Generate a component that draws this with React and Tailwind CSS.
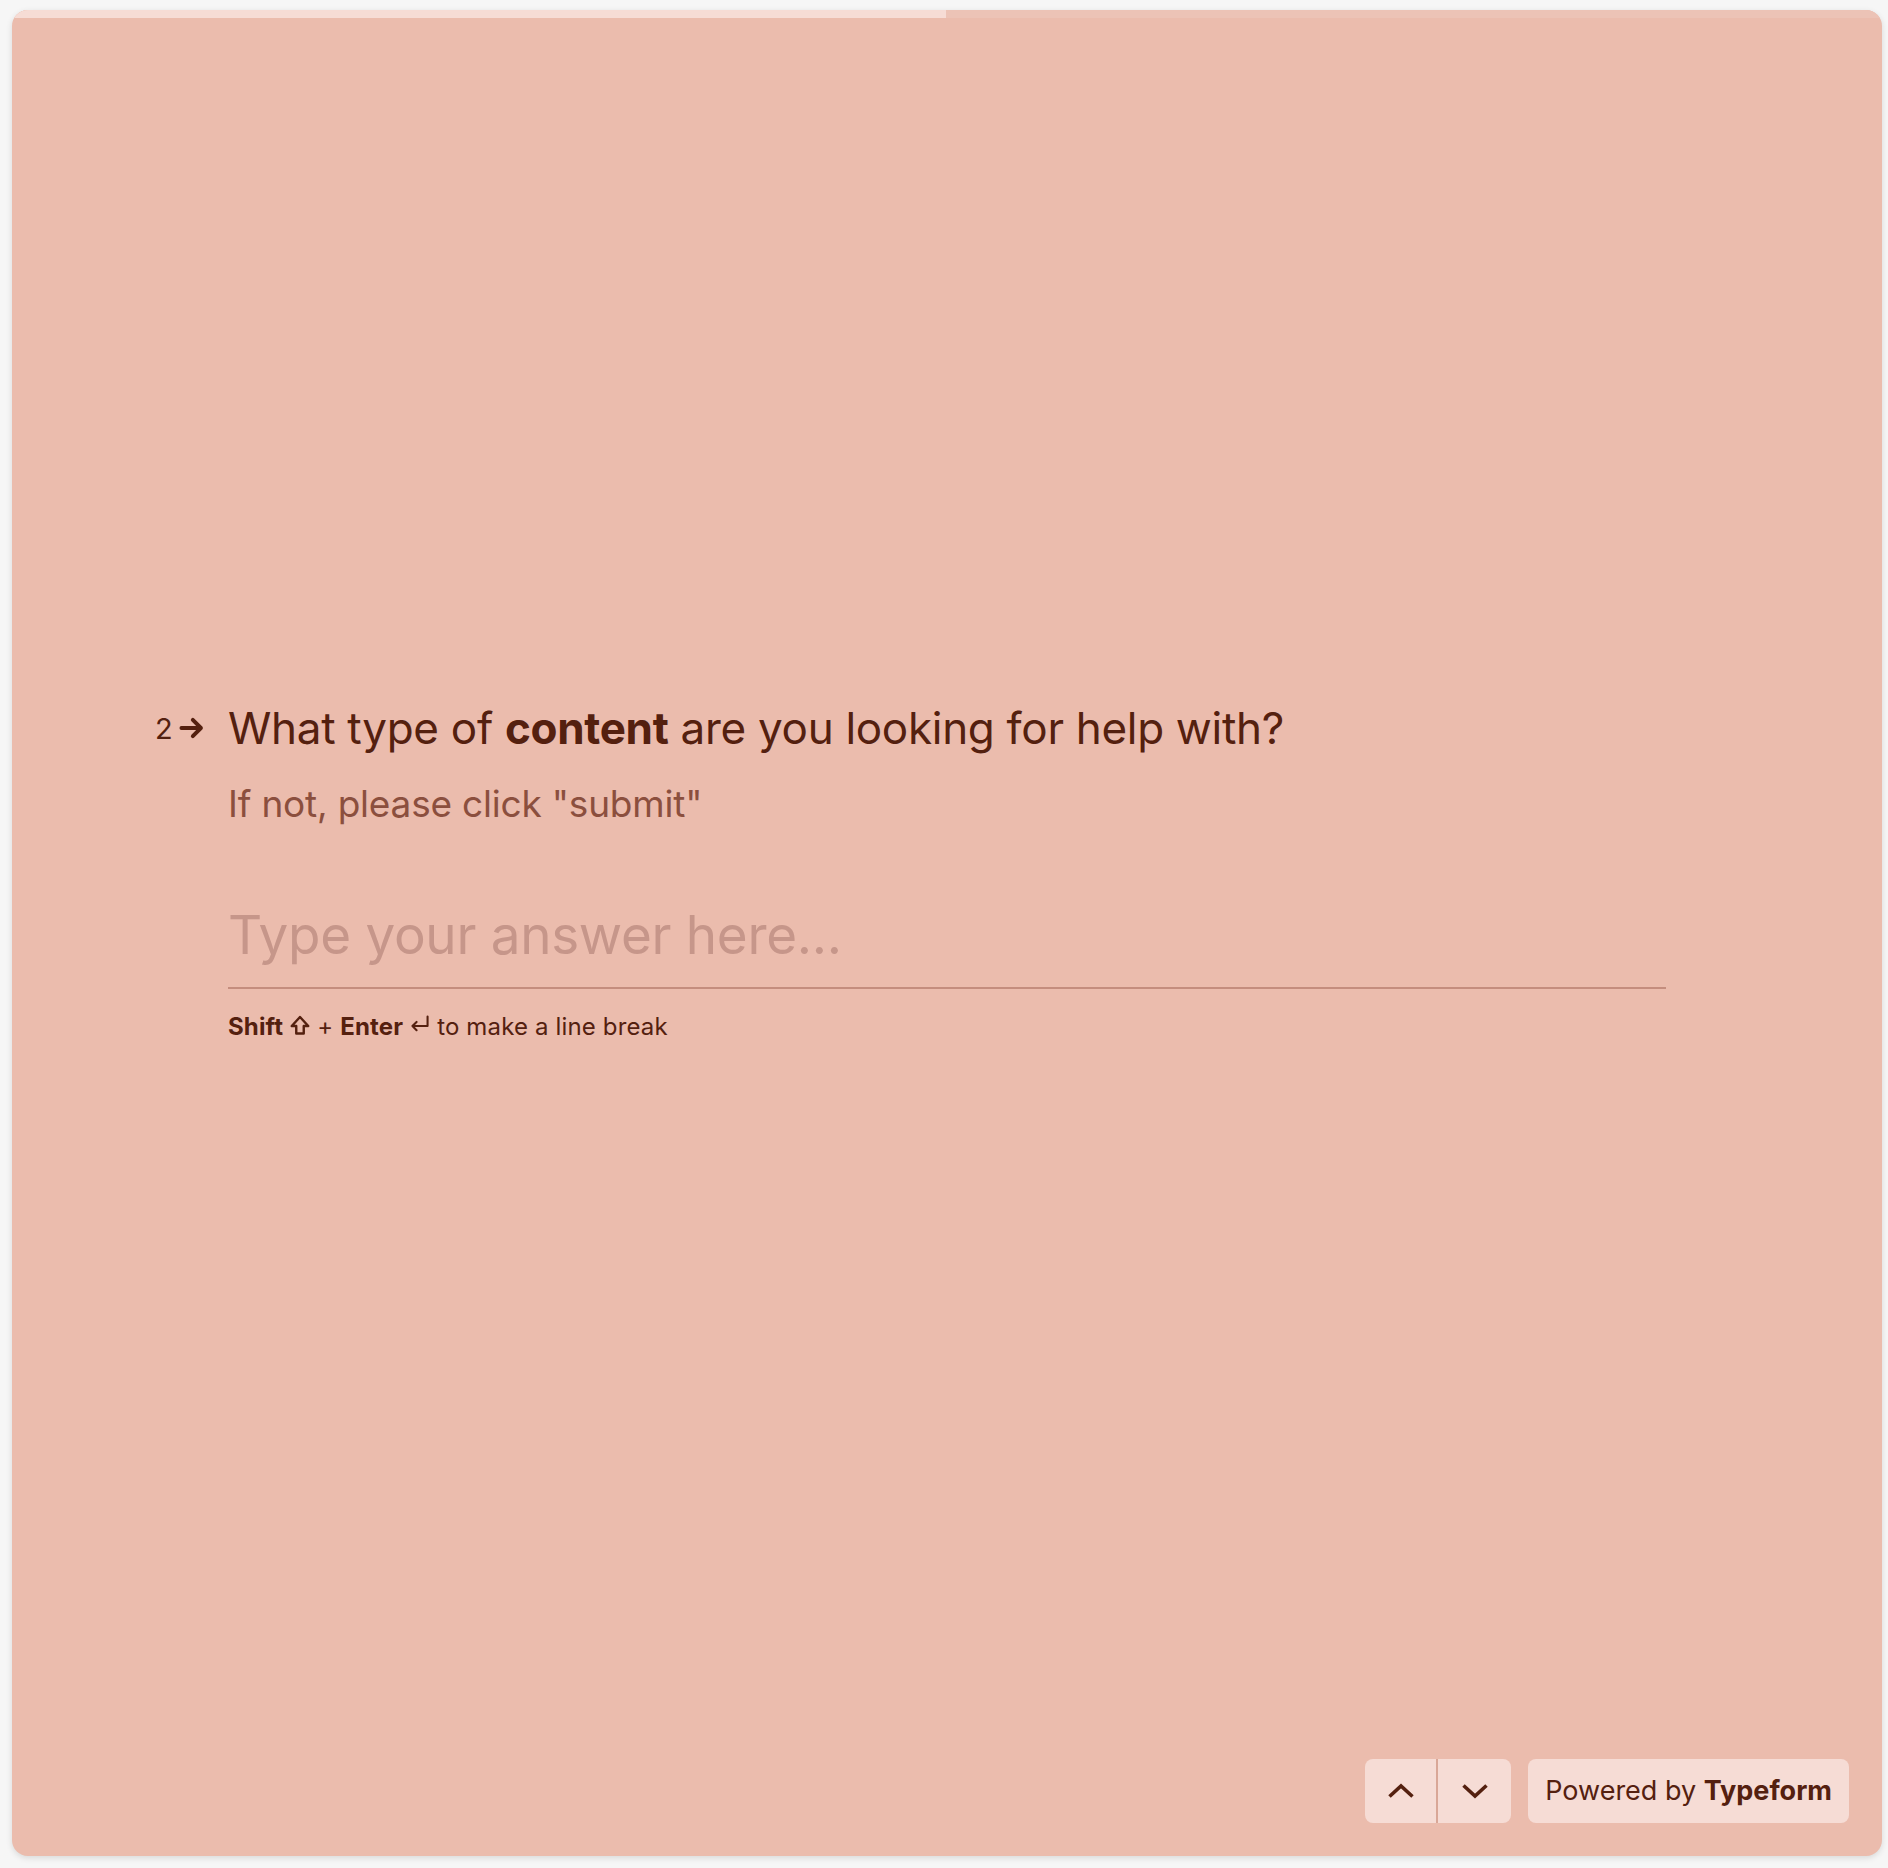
const ArrowRight = () => (
  <svg viewBox="0 0 16 16" className="w-[26px] h-[26px]" fill="none">
    <path d="M1.5 8h12M8.5 3 13.5 8l-5 5" stroke="#54200f" strokeWidth="2.4" strokeLinecap="round" strokeLinejoin="round" />
  </svg>
);

const ShiftIcon = () => (
  <svg viewBox="0 0 16 16" className="inline-block w-[24px] h-[24px] mx-[5px] -mt-[4px]" fill="none">
    <path d="M8 2 2.5 8H5.5v5h5V8h3z" stroke="#54200f" strokeWidth="1.6" strokeLinejoin="round" />
  </svg>
);

const EnterIcon = () => (
  <svg viewBox="0 0 16 16" className="inline-block w-[22px] h-[22px] mx-[6px] -mt-[8px]" fill="none">
    <path d="M13.5 2.5v7h-11M5.5 6.5 2.5 9.5l3 3" stroke="#54200f" strokeWidth="1.5" strokeLinecap="round" strokeLinejoin="round" />
  </svg>
);

const Chevron = ({ up }) => (
  <svg viewBox="0 0 28 16" className="w-[28px] h-[16px]" fill="none">
    <path d={up ? "M2.5 13.5 14 3l11.5 10.5" : "M2.5 2.5 14 13 25.5 2.5"} stroke="#54200f" strokeWidth="3.6" strokeLinejoin="miter" />
  </svg>
);

export default function App() {
  return (
    <div className="min-h-screen bg-[#f6f6f6] pt-[10px] pl-[12px] pr-[6px] pb-[12px]" style={{ fontFamily: "Inter, 'Noto Sans', sans-serif" }}>
      <div className="h-[1846px] bg-[#ebbcad] rounded-[16px] overflow-hidden shadow-[0_2px_6px_rgba(0,0,0,0.12)] flex flex-col text-[#54200f]">
        {/* progress */}
        <div className="h-[8px] w-full bg-[#ecc3b6] flex">
          <div className="h-full w-[934px] bg-[#f6dcd5]" />
        </div>

        <div className="flex-1 flex items-center justify-center pb-[37px]">
          <div className="w-[1438px] flex">
            <div className="w-[73px] -ml-[73px] flex items-center h-[60px] gap-[6px] text-[29px] leading-none">
              <span>2</span>
              <ArrowRight />
            </div>
            <div className="flex-1">
              <h1 className="text-[44px] leading-[60px] tracking-[-0.3px]">
                What type of <b className="font-bold">content</b> are you looking for help with?
              </h1>
              <p className="text-[37px] leading-[48px] mt-[22px] text-[#8b4f3e] tracking-[-0.2px]">If not, please click "submit"</p>
              <div className="mt-[73px] pb-[18px] border-b-[2px] border-[#c48d7e]">
                <span className="block text-[53px] leading-[68px] text-[#c6968a] tracking-[-0.3px]">Type your answer here...</span>
              </div>
              <p className="mt-[23px] text-[24px] leading-[30px] tracking-[0.15px]">
                <b className="font-bold">Shift</b>
                <ShiftIcon />
                + <b className="font-bold">Enter</b>
                <EnterIcon />
                to make a line break
              </p>
            </div>
          </div>
        </div>

        <div className="flex justify-end gap-[17px] pr-[33px] pb-[33px]">
          <div className="flex h-[64px] rounded-[8px] overflow-hidden bg-[#f6dcd5]">
            <button className="w-[73px] flex items-center justify-center border-r-2 border-[#d9a797]">
              <Chevron up />
            </button>
            <button className="w-[73px] flex items-center justify-center">
              <Chevron />
            </button>
          </div>
          <div className="h-[64px] px-[17px] rounded-[8px] bg-[#f6dcd5] flex items-center text-[27px]">
            Powered by&nbsp;<b className="font-bold">Typeform</b>
          </div>
        </div>
      </div>
    </div>
  );
}
